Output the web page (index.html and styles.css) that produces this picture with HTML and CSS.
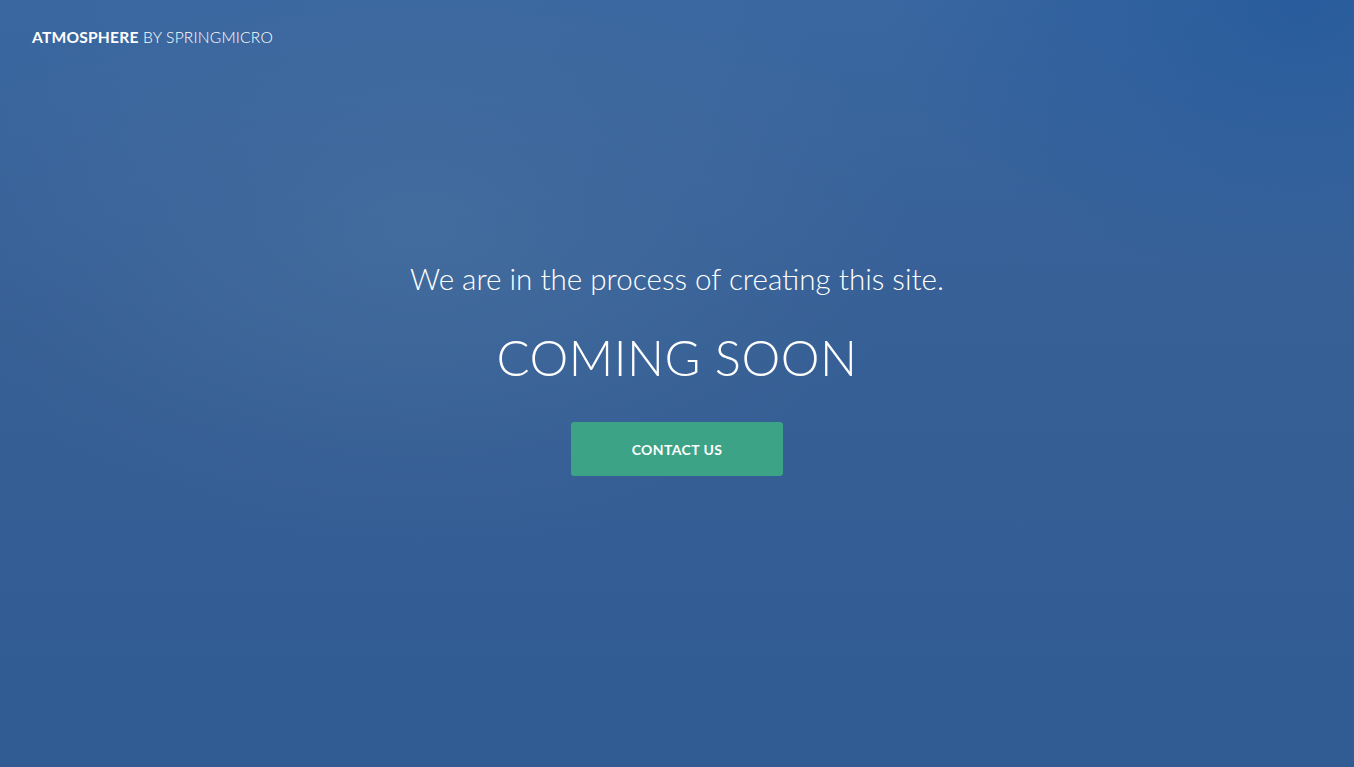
FILE: index.html
```html
<!DOCTYPE html>
<html lang="en">
<head>
<meta charset="utf-8">
<title>Atmosphere - Coming Soon</title>
<link rel="stylesheet" href="styles.css">
</head>
<body>
<div class="page">
  <header class="topbar">
    <span class="brand"><strong>ATMOSPHERE</strong> BY SPRINGMICRO</span>
  </header>
  <main class="hero">
    <p class="lead">We are in the process of creating this site.</p>
    <h1 class="title">COMING SOON</h1>
    <a class="btn" href="#">CONTACT US</a>
  </main>
</div>
</body>
</html>
```

FILE: styles.css
```css
html, body {
  margin: 0;
  padding: 0;
  height: 100%;
}
body {
  font-family: "Lato", "Open Sans", sans-serif;
  color: #fff;
  background: #315d95;
}
.page {
  position: relative;
  height: 767px;
  overflow: hidden;
  display: flex;
  flex-direction: column;
  background:
    radial-gradient(ellipse 700px 450px at 420px 230px, rgba(80,120,165,0.45), rgba(80,120,165,0) 70%),
    radial-gradient(ellipse 600px 400px at 1300px 0px, rgba(30,85,155,0.6), rgba(30,85,155,0) 70%),
    linear-gradient(180deg, #3a67a0 0%, #365f95 45%, #305b93 100%);
}
.topbar {
  padding: 27px 32px 0;
  height: 20px;
}
.brand {
  font-size: 15.6px;
  font-weight: 300;
  letter-spacing: 0.2px;
  line-height: 20px;
}
.brand strong {
  font-weight: 700;
}
.hero {
  display: flex;
  flex-direction: column;
  align-items: center;
  padding-top: 214px;
}
.lead {
  margin: 0;
  font-size: 29.6px;
  font-weight: 300;
  line-height: 36px;
}
.title {
  margin: 28px 0 0;
  font-size: 49px;
  font-weight: 300;
  line-height: 64px;
  letter-spacing: 0.5px;
}
.btn {
  margin-top: 33px;
  width: 212px;
  height: 54px;
  display: flex;
  align-items: center;
  justify-content: center;
  background: #3ca387;
  border-radius: 3px;
  color: #fff;
  text-decoration: none;
  font-size: 14px;
  font-weight: 700;
  letter-spacing: 0.4px;
}
```
